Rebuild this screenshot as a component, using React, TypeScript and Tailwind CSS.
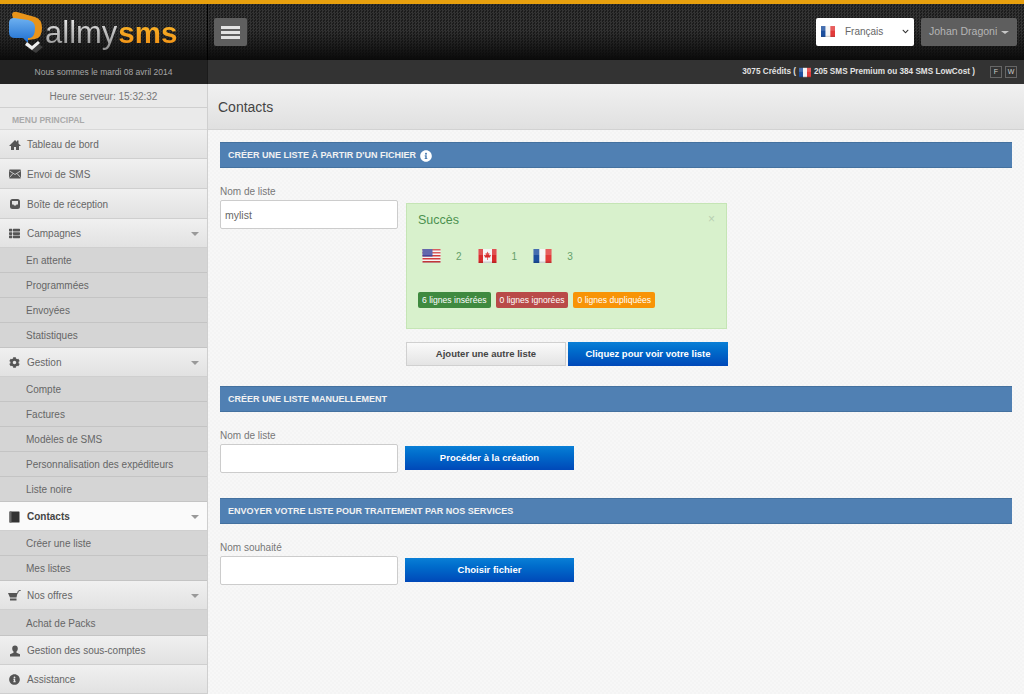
import React from 'react';
import { FaThList, FaCog, FaInfoCircle, FaChevronDown } from 'react-icons/fa';

const Gloss = () => (
  <>
    <rect width="18" height="6" fill="#fff" opacity="0.18" />
    <rect y="12.5" width="18" height="1.5" fill="#000" opacity="0.15" />
  </>
);

const FlagFr = ({ className }: { className: string }) => (
  <svg viewBox="0 0 18 14" className={className}>
    <rect width="6" height="14" fill="#1d4f9e" />
    <rect x="6" width="6" height="14" fill="#f4f4f4" />
    <rect x="12" width="6" height="14" fill="#e23a3a" />
    <Gloss />
  </svg>
);

const FlagUs = ({ className }: { className: string }) => (
  <svg viewBox="0 0 18 14" className={className}>
    <rect width="18" height="14" fill="#f4f4f4" />
    <rect y="0" width="18" height="1.5" fill="#d23c3c" />
    <rect y="3" width="18" height="1.5" fill="#d23c3c" />
    <rect y="6" width="18" height="1.5" fill="#d23c3c" />
    <rect y="9" width="18" height="1.5" fill="#d23c3c" />
    <rect y="12" width="18" height="1.5" fill="#d23c3c" />
    <rect width="10" height="7.5" fill="#41479b" />
    <Gloss />
  </svg>
);

const FlagCa = ({ className }: { className: string }) => (
  <svg viewBox="0 0 18 14" className={className}>
    <rect width="18" height="14" fill="#f4f4f4" />
    <rect width="4.5" height="14" fill="#d92b2b" />
    <rect x="13.5" width="4.5" height="14" fill="#d92b2b" />
    <path d="M9 2.5l1 2 1-.4-.4 2.4 1.4-.8.4 1-1 1.2.4.7H9.3V11h-.6V8.6H6.2l.4-.7-1-1.2.4-1 1.4.8-.4-2.4 1 .4z" fill="#d92b2b" />
    <Gloss />
  </svg>
);

const HomeIcon = () => (
  <svg viewBox="0 0 12 12" className="w-[12px] h-[12px]" fill="currentColor">
    <path d="M6 1 L8 3 V1.5 H9.5 V4.5 L12 7 H10 V11 H7 V8 H5 V11 H2 V7 H0 Z" />
  </svg>
);

const MailIcon = () => (
  <svg viewBox="0 0 12 10" className="w-[12px] h-[10px]">
    <rect width="12" height="9" y="0.5" rx="1" fill="currentColor" />
    <path d="M0.5 2 L6 5.5 L11.5 2 M0.5 8.5 L4 4.5 M11.5 8.5 L8 4.5" stroke="#e4e4e4" strokeWidth="0.8" fill="none" />
  </svg>
);

const InboxIcon = () => (
  <svg viewBox="0 0 12 12" className="w-[12px] h-[12px]">
    <rect x="1" y="1" width="10" height="10" rx="2.5" fill="currentColor" />
    <path d="M3 3 H9 V6.5 H7.5 L7 7.5 H5 L4.5 6.5 H3 Z" fill="#e4e4e4" />
  </svg>
);

const BookIcon = () => (
  <svg viewBox="0 0 11 12" className="w-[11px] h-[12px]">
    <rect x="0.5" y="0.5" width="10" height="11" rx="0.5" fill="#333" />
    <rect x="0.5" y="0.5" width="2" height="11" fill="#666" />
  </svg>
);

const CartIcon = () => (
  <svg viewBox="0 0 13 12" className="w-[13px] h-[12px]" fill="currentColor">
    <path d="M0 3 H9.5 L8.5 7.5 H2 Z" />
    <path d="M9.5 3.5 L10.3 1 L12.8 0.2" stroke="currentColor" strokeWidth="1" fill="none" />
    <rect x="2" y="8.5" width="6.5" height="2" />
  </svg>
);

const UserIcon = () => (
  <svg viewBox="0 0 12 12" className="w-[12px] h-[12px]" fill="currentColor">
    <path d="M6 0.5 C7.8 0.5 8.8 1.8 8.8 3.5 C8.8 5 8.1 6 7.5 6.5 V7.8 L11 9.3 V11.5 H1 V9.3 L4.5 7.8 V6.5 C3.9 6 3.2 5 3.2 3.5 C3.2 1.8 4.2 0.5 6 0.5 Z" />
  </svg>
);

type Item = { label: string; icon?: React.ReactNode; arrow?: boolean; active?: boolean; h: string };

const menu: Item[] = [
  { label: 'Tableau de bord', icon: <HomeIcon />, h: 'h-[29px]' },
  { label: 'Envoi de SMS', icon: <MailIcon />, h: 'h-[30px]' },
  { label: 'Boîte de réception', icon: <InboxIcon />, h: 'h-[30px]' },
  { label: 'Campagnes', icon: <FaThList />, arrow: true, h: 'h-[29px]' },
  { label: 'En attente', h: 'h-[25px]' },
  { label: 'Programmées', h: 'h-[25px]' },
  { label: 'Envoyées', h: 'h-[25px]' },
  { label: 'Statistiques', h: 'h-[25px]' },
  { label: 'Gestion', icon: <FaCog />, arrow: true, h: 'h-[29px]' },
  { label: 'Compte', h: 'h-[25px]' },
  { label: 'Factures', h: 'h-[25px]' },
  { label: 'Modèles de SMS', h: 'h-[25px]' },
  { label: 'Personnalisation des expéditeurs', h: 'h-[25px]' },
  { label: 'Liste noire', h: 'h-[25px]' },
  { label: 'Contacts', icon: <BookIcon />, arrow: true, active: true, h: 'h-[29px]' },
  { label: 'Créer une liste', h: 'h-[25px]' },
  { label: 'Mes listes', h: 'h-[25px]' },
  { label: 'Nos offres', icon: <CartIcon />, arrow: true, h: 'h-[29px]' },
  { label: 'Achat de Packs', h: 'h-[26px]' },
  { label: 'Gestion des sous-comptes', icon: <UserIcon />, h: 'h-[29px]' },
  { label: 'Assistance', icon: <FaInfoCircle />, h: 'h-[29px]' },
];

const MenuRow = ({ item }: { item: Item }) => {
  if (!item.icon) {
    return (
      <div className={`${item.h} flex items-center pl-[26px] pt-[1px] text-[10px] text-[#666] bg-[#d5d5d5] border-b border-[#c4c4c4]`}>
        {item.label}
      </div>
    );
  }
  return (
    <div
      className={`${item.h} flex items-center pt-[1px] text-[10px] border-b border-[#cfcfcf] ${
        item.active
          ? 'bg-[#fafafa] font-bold text-[#444]'
          : 'bg-gradient-to-b from-[#f0f0f0] to-[#e2e2e2] text-[#666]'
      }`}
    >
      <span className={`w-[27px] flex justify-center pl-[2px] text-[11px] ${item.active ? 'text-[#333]' : 'text-[#555]'}`}>{item.icon}</span>
      <span>{item.label}</span>
      {item.arrow && <span className="ml-auto mr-[8px] w-0 h-0 border-x-[4px] border-x-transparent border-t-[4px] border-t-[#999]" />}
    </div>
  );
};

const SectionTitle = ({ children }: { children: React.ReactNode }) => (
  <div className="h-[26px] flex items-center gap-[3px] pl-[8px] pt-[2px] bg-[#5080b3] border-y border-[#44719f] text-[9px] font-bold text-[#f2f2f2] uppercase">
    {children}
  </div>
);

const BlueButton = ({ children, className }: { children: React.ReactNode; className: string }) => (
  <button className={`h-[24px] flex items-center justify-center bg-gradient-to-b from-[#0a7fd6] to-[#0048b8] text-[9.5px] font-bold text-white ${className}`}>
    {children}
  </button>
);

const Field = ({ label, value }: { label: string; value?: string }) => (
  <div className="w-[178px]">
    <div className="text-[10px] text-[#777] leading-[12px] mb-[2px]">{label}</div>
    <input
      defaultValue={value}
      className="w-[178px] h-[29px] px-[4px] bg-white border border-[#ccc] rounded-[2px] text-[10.5px] text-[#666] outline-none"
    />
  </div>
);

export default function App() {
  return (
    <div className="w-[1024px] h-[694px] overflow-hidden flex flex-col bg-[#f6f6f6] font-['Liberation_Sans',Arial,sans-serif]">
      {/* Top bar */}
      <div className="h-[4px] bg-[#e8a00e]" />
      <div className="h-[56px] relative flex [background:linear-gradient(to_bottom,transparent_45%,#0a0a0a_100%),repeating-conic-gradient(#333_0_25%,#1c1c1c_0_50%)_0_0/3px_3px]">
        <div className="w-[208px] flex items-center border-r border-black">
          <svg viewBox="6 10 40 44" className="w-[40px] h-[44px] ml-[6px]">
            <defs>
              <linearGradient id="bubble" x1="0" y1="0" x2="0" y2="1">
                <stop offset="0" stopColor="#6db0f0" />
                <stop offset="1" stopColor="#1e6ecf" />
              </linearGradient>
            </defs>
            <path d="M12 14 Q13 11 17 12 L35 17 Q42 19 42 28 Q42 38 35 39 L28 40 L14 24 Z" fill="#e8941a" />
            <path d="M9 23 Q9 18 14 18 L28 20 Q35 21 35 28 Q35 37 30 38 L28 38 L28 43 L23 38 L15 38 Q9 38 9 32 Z" fill="url(#bubble)" />
            <path d="M28 48 L36 53 L43 47 L37 43 Z" fill="#3d3d3d" />
            <path d="M27 42 L32 46 L38 41 L40 43 L32 50 L25 45 Z" fill="#f0f0f0" />
          </svg>
          <div className="flex items-baseline leading-none -ml-[1px] mt-[1px]">
            <span className="text-[31px] leading-[36px] bg-gradient-to-b from-[#f4f4f4] to-[#8a8a8a] bg-clip-text text-transparent">allmy</span>
            <span className="text-[29.5px] leading-[36px] font-bold ml-[1px] bg-gradient-to-b from-[#fbc02d] to-[#f08a12] bg-clip-text text-transparent">sms</span>
          </div>
        </div>
        <button className="ml-[6px] mt-[14px] w-[33px] h-[28px] bg-[#5f5f5f] rounded-[2px] flex flex-col items-center justify-center gap-[2px]">
          <span className="block w-[19px] h-[3px] bg-[#e4e4e4]" />
          <span className="block w-[19px] h-[3px] bg-[#e4e4e4]" />
          <span className="block w-[19px] h-[3px] bg-[#e4e4e4]" />
        </button>
        <div className="ml-auto mr-[7px] mt-[14px] flex gap-[7px]">
          <div className="w-[98px] h-[28px] bg-white rounded-[2px] flex items-center pl-[5px] pb-[2px] text-[10px] text-[#666]">
            <FlagFr className="w-[14px] h-[11px]" />
            <span className="ml-[10px]">Français</span>
            <FaChevronDown className="ml-auto mr-[5px] text-[7px] text-[#333]" />
          </div>
          <div className="w-[96px] h-[28px] bg-[#5e5e5e] rounded-[2px] flex items-center pl-[8px] text-[10.5px] text-[#b5b5b5]">
            Johan Dragoni
            <span className="ml-auto mr-[8px] w-0 h-0 border-x-[4px] border-x-transparent border-t-[3px] border-t-[#c8c8c8]" />
          </div>
        </div>
      </div>

      {/* Info bar */}
      <div className="h-[24px] flex bg-[#333]">
        <div className="w-[208px] bg-[#232323] border-r border-[#1b1b1b] flex items-center justify-center text-[8.5px] text-[#a5a5a5]">
          Nous sommes le mardi 08 avril 2014
        </div>
        <div className="flex-1 flex items-center justify-end pr-[7px] text-[8.2px] font-bold text-[#e2e2e2]">
          3075 Crédits (
          <FlagFr className="w-[12px] h-[11px] mx-[3px]" />
          205 SMS Premium ou 384 SMS LowCost )
          <span className="ml-[15px] w-[12px] h-[12px] border border-[#666] flex items-center justify-center text-[7px] font-normal text-[#ccc]">F</span>
          <span className="ml-[3px] w-[12px] h-[12px] border border-[#666] flex items-center justify-center text-[7px] font-normal text-[#ccc]">W</span>
        </div>
      </div>

      <div className="flex-1 flex min-h-0">
        {/* Sidebar */}
        <div className="w-[208px] shrink-0 border-r border-[#cfcfcf] overflow-hidden">
          <div className="h-[24px] flex items-center justify-center pt-[2px] bg-[#e9e9e9] border-b border-[#cfcfcf] text-[10px] text-[#777]">
            Heure serveur: 15:32:32
          </div>
          <div className="h-[22px] flex items-center pl-[12px] pt-[3px] bg-[#eaeaea] border-b border-[#d8d8d8] text-[8.5px] font-bold text-[#aaa]">
            MENU PRINCIPAL
          </div>
          {menu.map((item) => (
            <MenuRow key={item.label} item={item} />
          ))}
        </div>

        {/* Main */}
        <div className="flex-1 min-w-0 bg-[repeating-conic-gradient(#f4f4f4_0_25%,#f7f7f7_0_50%)] bg-[length:4px_4px]">
          <div className="h-[46px] flex items-center pl-[10px] pt-[2px] bg-gradient-to-b from-[#f1f1f1] to-[#e0e0e0] border-b border-[#d2d2d2] text-[14px] text-[#444]">
            Contacts
          </div>
          <div className="pl-[12px] pr-[12px] pt-[12px]">
            <SectionTitle>
              Créer une liste à partir d'un fichier
              <FaInfoCircle className="text-[12px] text-white ml-[1px]" />
            </SectionTitle>

            <div className="flex mt-[18px]">
              <Field label="Nom de liste" value="mylist" />
              <div className="ml-[8px] mt-[17px] w-[322px]">
                <div className="relative w-[321px] h-[126px] bg-[#d8f1cc] border border-[#c5e5b5] pl-[11px] pt-[9px]">
                  <div className="text-[12.5px] text-[#4c9150] leading-[15px]">Succès</div>
                  <span className="absolute right-[11px] top-[6px] text-[12px] text-[#b8cfb2]">×</span>
                  <div className="flex items-center mt-[21px] h-[14px] text-[10px] text-[#65a06a]">
                    <FlagUs className="w-[19px] h-[14px] ml-[4px]" />
                    <span className="ml-[15px]">2</span>
                    <FlagCa className="w-[19px] h-[14px] ml-[16px]" />
                    <span className="ml-[15px]">1</span>
                    <FlagFr className="w-[19px] h-[14px] ml-[16px]" />
                    <span className="ml-[15px]">3</span>
                  </div>
                  <div className="flex gap-[5px] mt-[29px] text-[8.6px] text-white">
                    <span className="h-[16px] px-[4px] flex items-center rounded-[2px] bg-[#3f8a3f]">6 lignes insérées</span>
                    <span className="h-[16px] px-[4px] flex items-center rounded-[2px] bg-[#b94a48]">0 lignes ignorées</span>
                    <span className="h-[16px] px-[4px] flex items-center rounded-[2px] bg-[#f89406]">0 lignes dupliquées</span>
                  </div>
                </div>
                <div className="flex mt-[13px]">
                  <button className="w-[160px] h-[24px] bg-gradient-to-b from-[#fafafa] to-[#e4e4e4] border border-[#d0d0d0] text-[9.5px] font-bold text-[#444]">
                    Ajouter une autre liste
                  </button>
                  <BlueButton className="w-[160px] ml-[2px]">Cliquez pour voir votre liste</BlueButton>
                </div>
              </div>
            </div>

            <div className="mt-[20px]">
              <SectionTitle>Créer une liste manuellement</SectionTitle>
            </div>
            <div className="flex items-end mt-[18px]">
              <Field label="Nom de liste" />
              <BlueButton className="w-[169px] ml-[7px] mb-[3px]">Procéder à la création</BlueButton>
            </div>

            <div className="mt-[25px]">
              <SectionTitle>Envoyer votre liste pour traitement par nos services</SectionTitle>
            </div>
            <div className="flex items-end mt-[18px]">
              <Field label="Nom souhaité" />
              <BlueButton className="w-[169px] ml-[7px] mb-[3px]">Choisir fichier</BlueButton>
            </div>
          </div>
        </div>
      </div>
    </div>
  );
}
